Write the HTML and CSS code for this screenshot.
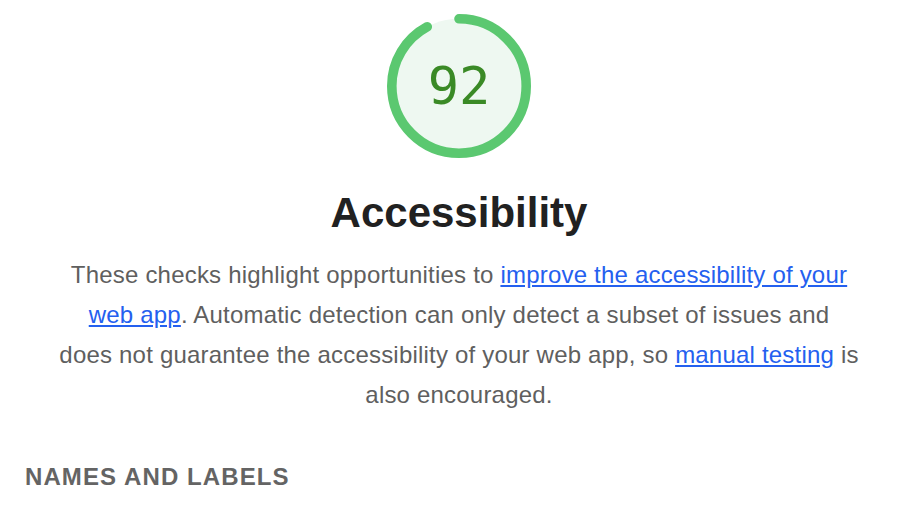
FILE: index.html
```html
<!DOCTYPE html>
<html lang="en">
<head>
<meta charset="utf-8">
<title>Accessibility</title>
<link rel="stylesheet" href="styles.css">
</head>
<body>
<div class="page">
  <div class="category-header">
    <div class="gauge">
      <svg class="gauge-svg" viewBox="0 0 120 120" width="144" height="144">
        <circle class="gauge-base" cx="60" cy="60" r="56"></circle>
        <circle class="gauge-arc" cx="60" cy="60" r="56" transform="rotate(-90 60 60)" stroke-dasharray="323.7 351.9"></circle>
      </svg>
      <div class="gauge-value">92</div>
    </div>
    <h1 class="category-title">Accessibility</h1>
    <p class="category-desc">These checks highlight opportunities to <a href="#">improve the accessibility of your web app</a>. Automatic detection can only detect a subset of issues and<br>does not guarantee the accessibility of your web app, so <a href="#">manual testing</a> is also encouraged.</p>
  </div>
  <h2 class="group-title">Names and labels</h2>
</div>
</body>
</html>
```
FILE: styles.css
```css
html, body {
  margin: 0;
  padding: 0;
  background: #ffffff;
}

body {
  font-family: "Liberation Sans", Arial, sans-serif;
}

.page {
  padding: 0 11px 0 25px;
}

.category-header {
  display: flex;
  flex-direction: column;
  align-items: center;
}

.gauge {
  position: relative;
  width: 144px;
  height: 144px;
  margin-top: 14px;
}

.gauge-svg {
  display: block;
}

.gauge-base {
  fill: #eef8f1;
  stroke: none;
}

.gauge-arc {
  fill: none;
  stroke: #5bc870;
  stroke-width: 8;
  stroke-linecap: round;
}

.gauge-value {
  position: absolute;
  inset: 0;
  display: flex;
  align-items: center;
  justify-content: center;
  font-family: "DejaVu Sans Mono", monospace;
  font-size: 52px;
  color: #3a8a26;
}

.category-title {
  margin: 30px 0 0;
  font-size: 42px;
  font-weight: 700;
  line-height: 50px;
  color: #212121;
}

.category-desc {
  margin: 17px 0 0;
  width: 806px;
  text-align: center;
  font-size: 24px;
  line-height: 40px;
  letter-spacing: 0.2px;
  color: #5f5f5f;
}

.category-desc a {
  color: #2460ef;
  text-decoration: underline;
}

.group-title {
  margin: 48px 0 0;
  font-size: 24px;
  font-weight: 700;
  line-height: 28px;
  letter-spacing: 1.1px;
  text-transform: uppercase;
  color: #646464;
}
```
